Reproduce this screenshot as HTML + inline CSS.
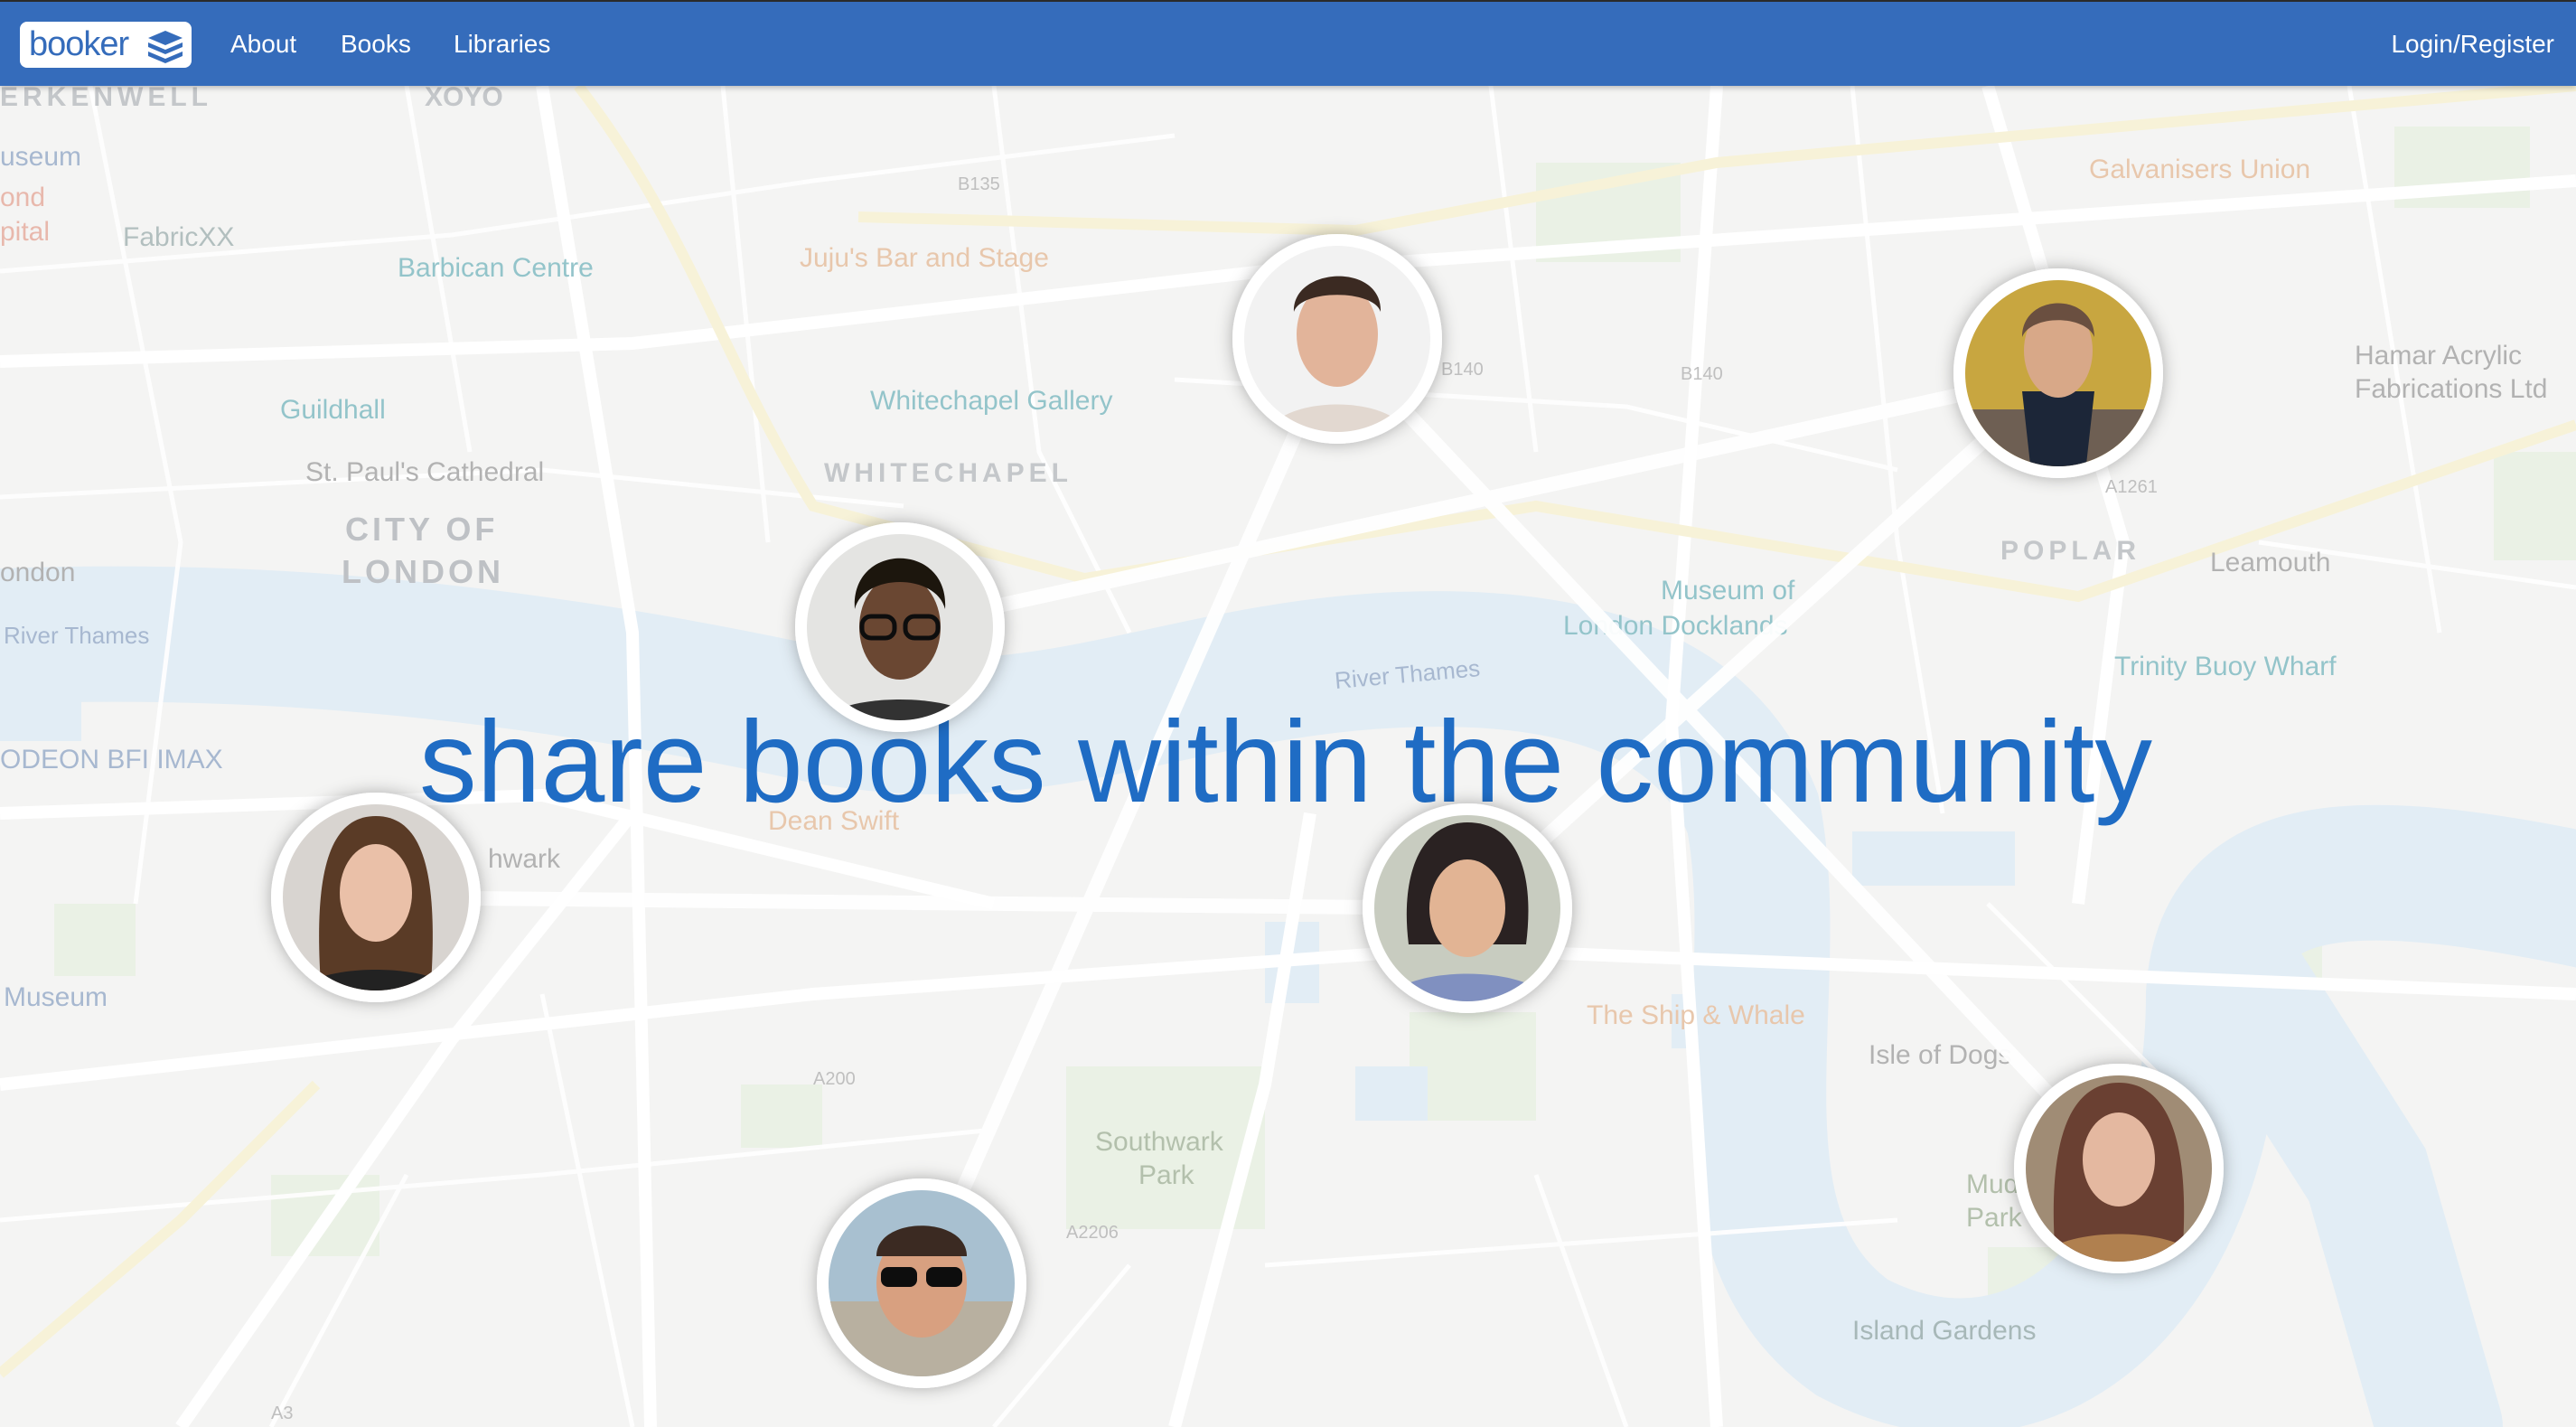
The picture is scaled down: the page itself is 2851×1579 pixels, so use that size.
<!DOCTYPE html>
<html><head><meta charset="utf-8"><style>
html,body{margin:0;padding:0;width:2851px;height:1579px;overflow:hidden;background:#f2f2f0;font-family:"Liberation Sans",sans-serif}
.nav{position:absolute;left:0;top:0;width:2851px;height:95px;background:#356cbb;border-top:2px solid #2a2a2a;box-sizing:border-box;box-shadow:0 2px 6px rgba(0,0,0,.25);z-index:5}
.logo{position:absolute;left:22px;top:22px;width:190px;height:51px;background:#fff;border-radius:8px}
.logo span{position:absolute;left:10px;top:4px;font-size:38px;color:#356cbb;letter-spacing:-1px}
.nav a{position:absolute;top:31px;color:#fff;font-size:28px;text-decoration:none}
svg{position:absolute;left:0;top:0}
</style></head><body>
<svg width="2851" height="1579" viewBox="0 0 2851 1579">
<defs>
<filter id="sh" x="-30%" y="-30%" width="160%" height="160%"><feDropShadow dx="0" dy="0" stdDeviation="9" flood-color="#000" flood-opacity=".3"/></filter>
<clipPath id="c1"><circle cx="0" cy="0" r="103"/></clipPath>
</defs>
<rect width="2851" height="1579" fill="#f1f1ef"/>
<g fill="#e3ecdc">
<rect x="1700" y="180" width="160" height="110"/><rect x="2650" y="140" width="150" height="90"/>
<rect x="1180" y="1180" width="220" height="180"/><rect x="1560" y="1120" width="140" height="120"/>
<rect x="2200" y="1380" width="170" height="120"/><rect x="60" y="1000" width="90" height="80"/>
<rect x="2450" y="1030" width="120" height="140"/><rect x="300" y="1300" width="120" height="90"/>
<rect x="820" y="1200" width="90" height="70"/><rect x="2760" y="500" width="91" height="120"/>
</g>
<g fill="none" stroke="#d9e7f2" stroke-linecap="round">
<path d="M-20,705 C300,690 600,725 900,790 C1150,840 1300,740 1550,730 C1800,720 1900,800 1940,900 C1980,1100 1880,1360 2050,1480 C2260,1590 2450,1400 2450,1100 C2460,950 2600,940 2880,1000" stroke-width="150"/>
<path d="M2480,1080 L2620,1300 L2700,1579" stroke-width="140"/>
</g>
<g fill="#d9e7f2"><rect x="1850" y="1100" width="120" height="60"/><rect x="2050" y="920" width="180" height="60"/><rect x="1500" y="1180" width="80" height="60"/><rect x="1400" y="1020" width="60" height="90"/><rect x="0" y="760" width="90" height="60"/></g>
<g fill="none" stroke="#ffffff" stroke-width="5" opacity=".9">
<path d="M0,300 L500,260 L900,200 L1300,150"/><path d="M100,95 L200,600 L150,1000"/><path d="M450,95 L520,500"/>
<path d="M800,95 L850,600"/><path d="M1100,95 L1150,500 L1250,700"/><path d="M1650,95 L1700,500"/>
<path d="M2050,95 L2100,600 L2150,900"/><path d="M2600,95 L2700,700"/><path d="M0,1350 L600,1300 L1100,1250"/>
<path d="M1400,1400 L2100,1350"/><path d="M2500,600 L2851,650"/><path d="M0,550 L600,520 L1000,560"/>
<path d="M1300,420 L1800,450 L2100,520"/><path d="M600,1100 L700,1579"/><path d="M1700,1300 L1800,1579"/>
<path d="M2200,1000 L2400,1200"/><path d="M300,1579 L450,1300"/><path d="M1100,1579 L1250,1400"/>
</g>
<g fill="none" stroke="#ffffff" stroke-width="14">
<path d="M0,400 L700,380 L1400,300 L2851,200"/><path d="M0,1200 L900,1100 L1600,1050 L2851,1100"/>
<path d="M600,95 L700,700 L720,1579"/><path d="M1900,95 L1850,800 L1900,1579"/>
<path d="M0,900 L600,880 L1100,1000"/><path d="M2200,95 L2350,600 L2300,1000"/>
<path d="M200,1579 L500,1150 L700,900"/><path d="M1300,1579 L1400,1200 L1450,900"/>
</g>
<g fill="none" stroke="#f5eecb" stroke-width="12">
<path d="M640,95 C760,250 800,400 900,560 L1200,640 L1700,560 L2300,660 L2851,470"/>
<path d="M950,240 L1500,255 L1900,180 L2851,95"/>
<path d="M0,1520 L200,1350 L350,1200"/>
</g>
<g font-family="Liberation Sans,sans-serif" font-size="30" fill="#9aa6b0">
<text x="0" y="117" letter-spacing="5" font-weight="bold" fill="#b0b4b8">ERKENWELL</text>
<text x="470" y="117" font-weight="bold" fill="#b0b4b8">XOYO</text>
<text x="0" y="183" fill="#8aa0c0">useum</text><text x="0" y="228" fill="#e0a090">ond</text><text x="0" y="266" fill="#e0a090">pital</text>
<text x="136" y="272" fill="#9aa">FabricXX</text>
<text x="440" y="306" fill="#6fb0b8">Barbican Centre</text>
<text x="885" y="295" fill="#e0b590">Juju's Bar and Stage</text>
<text x="310" y="463" fill="#6fb0b8">Guildhall</text>
<text x="963" y="453" fill="#6fb0b8">Whitechapel Gallery</text>
<text x="338" y="532" fill="#999">St. Paul's Cathedral</text>
<text x="912" y="533" font-weight="bold" letter-spacing="5" fill="#b0b4b8">WHITECHAPEL</text>
<text x="382" y="598" font-size="36" font-weight="bold" letter-spacing="4" fill="#a8adb2">CITY OF</text>
<text x="378" y="645" font-size="36" font-weight="bold" letter-spacing="4" fill="#a8adb2">LONDON</text>
<text x="0" y="643" fill="#999">ondon</text><text x="4" y="712" font-size="26" fill="#8aa0c0">River Thames</text>
<text x="0" y="850" fill="#8aa0c0">ODEON BFI IMAX</text>
<text x="2312" y="197" fill="#e0b590">Galvanisers Union</text>
<text x="2606" y="403" fill="#999">Hamar Acrylic</text><text x="2606" y="440" fill="#999">Fabrications Ltd</text>
<text x="2214" y="619" font-weight="bold" letter-spacing="5" fill="#b0b4b8">POPLAR</text>
<text x="2446" y="632" fill="#999">Leamouth</text>
<text x="1838" y="663" fill="#6fb0b8">Museum of</text><text x="1730" y="702" fill="#6fb0b8">London Docklands</text>
<text x="2340" y="747" fill="#6fb0b8">Trinity Buoy Wharf</text>
<text x="1478" y="762" font-size="26" fill="#8aa0c0" transform="rotate(-5 1478 762)">River Thames</text>
<text x="850" y="918" fill="#e0b590">Dean Swift</text>
<text x="540" y="960" fill="#999">hwark</text>
<text x="1756" y="1133" fill="#e0b590">The Ship &amp; Whale</text>
<text x="2068" y="1177" fill="#999">Isle of Dogs</text>
<text x="1212" y="1273" fill="#9aab90">Southwark</text><text x="1260" y="1310" fill="#9aab90">Park</text>
<text x="4" y="1113" fill="#8aa0c0">Museum</text>
<text x="2050" y="1482" fill="#8aa0a0">Island Gardens</text>
<text x="2176" y="1320" fill="#9aab90">Mudchute</text><text x="2176" y="1357" fill="#9aab90">Park</text>
<g font-size="20" fill="#aaa"><text x="1060" y="210">B135</text><text x="1595" y="415">B140</text><text x="1860" y="420">B140</text><text x="2330" y="545">A1261</text><text x="300" y="1570">A3</text><text x="1180" y="1370">A2206</text><text x="900" y="1200">A200</text></g>
</g>
<rect width="2851" height="1579" fill="#fff" opacity=".25"/>
<g stroke="#fff" stroke-width="16" stroke-linecap="round" opacity=".95">
<line x1="1480" y1="375" x2="1020" y2="1420"/>
<line x1="1480" y1="375" x2="2345" y2="1293"/>
<line x1="2278" y1="413" x2="996" y2="694"/>
<line x1="2278" y1="413" x2="1624" y2="1005"/>
<line x1="416" y1="993" x2="1624" y2="1005"/>
</g>
<text x="464" y="887" font-family="Liberation Sans,sans-serif" font-size="128" fill="#1f6cc4" textLength="1918" lengthAdjust="spacingAndGlyphs">share books within the community</text>
<g transform="translate(1480,375)" filter="url(#sh)"><circle r="116" fill="#fff"/><g clip-path="url(#c1)"><rect x="-110" y="-110" width="220" height="220" fill="#f2f2f2"/><ellipse cx="0" cy="-5" rx="45" ry="58" fill="#e2b49a"/><path d="M-48,-30 C-50,-80 50,-85 48,-30 C40,-55 -40,-55 -48,-30Z" fill="#3a2a22"/><path d="M-80,110 C-70,60 70,60 80,110Z" fill="#e2d8d0"/></g></g>
<g transform="translate(2278,413)" filter="url(#sh)"><circle r="116" fill="#fff"/><g clip-path="url(#c1)"><rect x="-110" y="-110" width="220" height="220" fill="#c8a640"/><rect x="-110" y="40" width="220" height="80" fill="#6e5f52"/><path d="M-40,20 L40,20 L30,110 L-30,110Z" fill="#1e2838"/><ellipse cx="0" cy="-25" rx="38" ry="52" fill="#d8a888"/><path d="M-40,-40 C-40,-90 40,-90 40,-40 C30,-65 -30,-65 -40,-40Z" fill="#6a5040"/></g></g>
<g transform="translate(996,694)" filter="url(#sh)"><circle r="116" fill="#fff"/><g clip-path="url(#c1)"><rect x="-110" y="-110" width="220" height="220" fill="#e4e4e2"/><ellipse cx="0" cy="0" rx="45" ry="58" fill="#6a4632"/><path d="M-50,-20 C-55,-95 55,-95 50,-20 C40,-60 -40,-60 -50,-20Z" fill="#1e1410"/><rect x="-42" y="-12" width="36" height="24" rx="10" fill="none" stroke="#111" stroke-width="5"/><rect x="6" y="-12" width="36" height="24" rx="10" fill="none" stroke="#111" stroke-width="5"/><path d="M-90,110 C-80,70 80,70 90,110Z" fill="#303030"/></g></g>
<g transform="translate(416,993)" filter="url(#sh)"><circle r="116" fill="#fff"/><g clip-path="url(#c1)"><rect x="-110" y="-110" width="220" height="220" fill="#d8d4d0"/><path d="M-60,110 C-70,-20 -55,-90 0,-90 C55,-90 70,-20 60,110Z" fill="#5a3a28"/><ellipse cx="0" cy="-5" rx="40" ry="54" fill="#eac0a8"/><path d="M-90,110 C-80,70 80,70 90,110Z" fill="#222"/></g></g>
<g transform="translate(1624,1005)" filter="url(#sh)"><circle r="116" fill="#fff"/><g clip-path="url(#c1)"><rect x="-110" y="-110" width="220" height="220" fill="#c8ccc0"/><path d="M-65,40 C-75,-40 -50,-95 0,-95 C55,-95 75,-40 65,40Z" fill="#2a2220"/><ellipse cx="0" cy="0" rx="42" ry="54" fill="#e2b494"/><path d="M-95,110 C-85,60 85,60 95,110Z" fill="#8090c0"/></g></g>
<g transform="translate(2345,1293)" filter="url(#sh)"><circle r="116" fill="#fff"/><g clip-path="url(#c1)"><rect x="-110" y="-110" width="220" height="220" fill="#a08c74"/><path d="M-70,100 C-80,-30 -55,-95 0,-95 C55,-95 80,-30 70,100Z" fill="#6a4030"/><ellipse cx="0" cy="-10" rx="40" ry="52" fill="#e4b8a0"/><path d="M-95,110 C-85,60 85,60 95,110Z" fill="#b08050"/></g></g>
<g transform="translate(1020,1420)" filter="url(#sh)"><circle r="116" fill="#fff"/><g clip-path="url(#c1)"><rect x="-110" y="-110" width="220" height="220" fill="#a8c0d0"/><rect x="-110" y="20" width="220" height="90" fill="#b8b0a0"/><ellipse cx="0" cy="0" rx="50" ry="60" fill="#d8a080"/><path d="M-50,-30 C-50,-75 50,-75 50,-30Z" fill="#3a2a20"/><rect x="-45" y="-18" width="40" height="22" rx="8" fill="#111"/><rect x="5" y="-18" width="40" height="22" rx="8" fill="#111"/></g></g>
</svg>
<div class="nav">
<div class="logo"><span>booker</span>
<svg style="left:140px;top:8px" width="42" height="38" viewBox="0 0 42 38"><g fill="#356cbb"><path d="M21,2 L40,10 L21,18 L2,10Z"/><path d="M2,15 L21,23 L40,15 L40,20 L21,28 L2,20Z"/><path d="M2,25 L21,33 L40,25 L40,30 L21,38 L2,30Z"/></g></svg></div>
<a style="left:255px">About</a><a style="left:377px">Books</a><a style="left:502px">Libraries</a>
<a style="right:24px">Login/Register</a>
</div>
</body></html>
